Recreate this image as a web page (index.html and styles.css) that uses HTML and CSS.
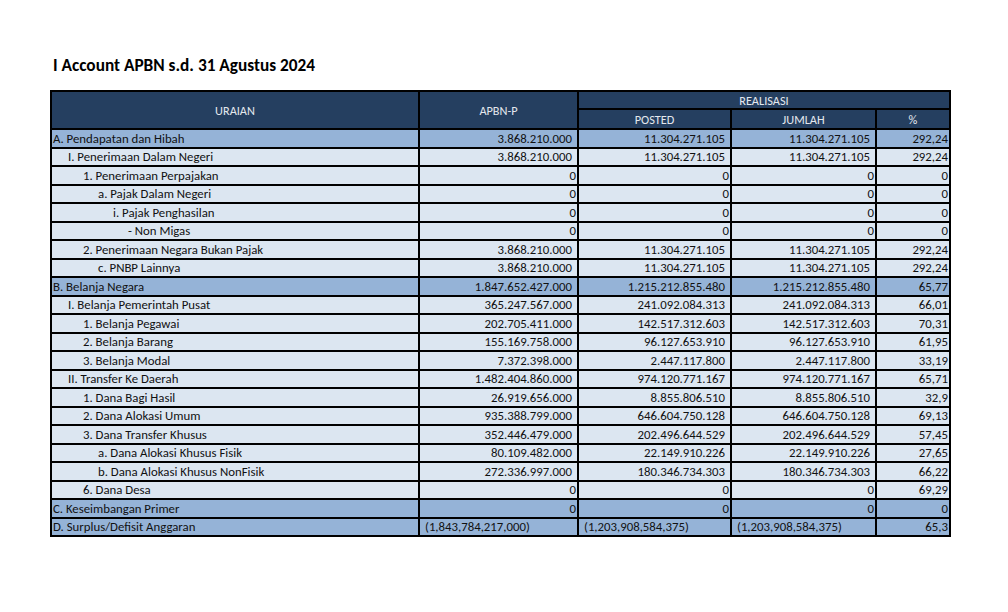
FILE: index.html
```html
<!DOCTYPE html>
<html lang="id">
<head>
<meta charset="utf-8">
<title>I Account APBN</title>
<link rel="stylesheet" href="styles.css">
</head>
<body>
<div class="page">
  <h1 class="title">I Account APBN s.d. 31 Agustus 2024</h1>
  <div class="sheet">
    <div class="hd uraian">URAIAN</div>
    <div class="hd apbn">APBN-P</div>
    <div class="hd realisasi">REALISASI</div>
    <div class="hd posted">POSTED</div>
    <div class="hd jumlah">JUMLAH</div>
    <div class="hd pct">%</div>

    <div class="row main"><div class="c l0">A. Pendapatan dan Hibah</div><div class="c n">3.868.210.000</div><div class="c n">11.304.271.105</div><div class="c n">11.304.271.105</div><div class="c p">292,24</div></div>
    <div class="row sub"><div class="c l1">I. Penerimaan Dalam Negeri</div><div class="c n">3.868.210.000</div><div class="c n">11.304.271.105</div><div class="c n">11.304.271.105</div><div class="c p">292,24</div></div>
    <div class="row sub"><div class="c l2">1. Penerimaan Perpajakan</div><div class="c z">0</div><div class="c z">0</div><div class="c z">0</div><div class="c p">0</div></div>
    <div class="row sub"><div class="c l3">a. Pajak Dalam Negeri</div><div class="c z">0</div><div class="c z">0</div><div class="c z">0</div><div class="c p">0</div></div>
    <div class="row sub"><div class="c l4">i. Pajak Penghasilan</div><div class="c z">0</div><div class="c z">0</div><div class="c z">0</div><div class="c p">0</div></div>
    <div class="row sub"><div class="c l5">- Non Migas</div><div class="c z">0</div><div class="c z">0</div><div class="c z">0</div><div class="c p">0</div></div>
    <div class="row sub"><div class="c l2">2. Penerimaan Negara Bukan Pajak</div><div class="c n">3.868.210.000</div><div class="c n">11.304.271.105</div><div class="c n">11.304.271.105</div><div class="c p">292,24</div></div>
    <div class="row sub"><div class="c l3">c. PNBP Lainnya</div><div class="c n">3.868.210.000</div><div class="c n">11.304.271.105</div><div class="c n">11.304.271.105</div><div class="c p">292,24</div></div>
    <div class="row main"><div class="c l0">B. Belanja Negara</div><div class="c n">1.847.652.427.000</div><div class="c n">1.215.212.855.480</div><div class="c n">1.215.212.855.480</div><div class="c p">65,77</div></div>
    <div class="row sub"><div class="c l1">I. Belanja Pemerintah Pusat</div><div class="c n">365.247.567.000</div><div class="c n">241.092.084.313</div><div class="c n">241.092.084.313</div><div class="c p">66,01</div></div>
    <div class="row sub"><div class="c l2">1. Belanja Pegawai</div><div class="c n">202.705.411.000</div><div class="c n">142.517.312.603</div><div class="c n">142.517.312.603</div><div class="c p">70,31</div></div>
    <div class="row sub"><div class="c l2">2. Belanja Barang</div><div class="c n">155.169.758.000</div><div class="c n">96.127.653.910</div><div class="c n">96.127.653.910</div><div class="c p">61,95</div></div>
    <div class="row sub"><div class="c l2">3. Belanja Modal</div><div class="c n">7.372.398.000</div><div class="c n">2.447.117.800</div><div class="c n">2.447.117.800</div><div class="c p">33,19</div></div>
    <div class="row sub"><div class="c l1">II. Transfer Ke Daerah</div><div class="c n">1.482.404.860.000</div><div class="c n">974.120.771.167</div><div class="c n">974.120.771.167</div><div class="c p">65,71</div></div>
    <div class="row sub"><div class="c l2">1. Dana Bagi Hasil</div><div class="c n">26.919.656.000</div><div class="c n">8.855.806.510</div><div class="c n">8.855.806.510</div><div class="c p">32,9</div></div>
    <div class="row sub"><div class="c l2">2. Dana Alokasi Umum</div><div class="c n">935.388.799.000</div><div class="c n">646.604.750.128</div><div class="c n">646.604.750.128</div><div class="c p">69,13</div></div>
    <div class="row sub"><div class="c l2">3. Dana Transfer Khusus</div><div class="c n">352.446.479.000</div><div class="c n">202.496.644.529</div><div class="c n">202.496.644.529</div><div class="c p">57,45</div></div>
    <div class="row sub"><div class="c l3">a. Dana Alokasi Khusus Fisik</div><div class="c n">80.109.482.000</div><div class="c n">22.149.910.226</div><div class="c n">22.149.910.226</div><div class="c p">27,65</div></div>
    <div class="row sub"><div class="c l3">b. Dana Alokasi Khusus NonFisik</div><div class="c n">272.336.997.000</div><div class="c n">180.346.734.303</div><div class="c n">180.346.734.303</div><div class="c p">66,22</div></div>
    <div class="row sub"><div class="c l2">6. Dana Desa</div><div class="c z">0</div><div class="c z">0</div><div class="c z">0</div><div class="c p">69,29</div></div>
    <div class="row main"><div class="c l0">C. Keseimbangan Primer</div><div class="c z">0</div><div class="c z">0</div><div class="c z">0</div><div class="c p">0</div></div>
    <div class="row main"><div class="c l0">D. Surplus/Defisit Anggaran</div><div class="c t">(1,843,784,217,000)</div><div class="c t">(1,203,908,584,375)</div><div class="c t">(1,203,908,584,375)</div><div class="c p">65,3</div></div>
  </div>
</div>
</body>
</html>
```

FILE: styles.css
```css
* { box-sizing: border-box; }
html, body { margin: 0; padding: 0; background: #ffffff; }
body {
  font-family: "Carlito", "Lato", "Liberation Sans", sans-serif;
  color: #111111;
}
.page {
  padding: 55px 0 0 50px;
}
.title {
  margin: 0 0 0 3px;
  font-size: 17.3px;
  font-weight: 700;
  line-height: 22px;
  height: 35px;
  color: #000;
}
.sheet {
  width: 901px;
  display: grid;
  grid-template-columns: 366px 157px 151px 143px 72px;
  grid-template-rows: 16px 18px;
  grid-auto-rows: 16.5px;
  gap: 2px;
  padding: 2px;
  background: #000;
  font-size: 12.8px;
}
.row { display: contents; }
.hd {
  background: #253f60;
  color: #e4e8ee;
  display: flex;
  align-items: center;
  justify-content: center;
  font-size: 12.3px;
}
.uraian { grid-column: 1; grid-row: 1 / span 2; }
.apbn { grid-column: 2; grid-row: 1 / span 2; }
.realisasi { grid-column: 3 / span 3; grid-row: 1; }
.posted { grid-column: 3; grid-row: 2; }
.jumlah { grid-column: 4; grid-row: 2; }
.pct { grid-column: 5; grid-row: 2; }
.c {
  display: flex;
  align-items: center;
  white-space: nowrap;
  overflow: hidden;
}
.main .c { background: #95b3d7; }
.sub .c { background: #dce6f1; }
.l0 { padding-left: 1px; }
.l1 { padding-left: 16px; }
.l2 { padding-left: 31px; }
.l3 { padding-left: 46px; }
.l4 { padding-left: 61px; }
.l5 { padding-left: 76px; }
.n { justify-content: flex-end; padding-right: 5px; }
.z { justify-content: flex-end; padding-right: 1px; }
.p { justify-content: flex-end; padding-right: 1px; }
.t { justify-content: flex-start; padding-left: 5px; }
```
